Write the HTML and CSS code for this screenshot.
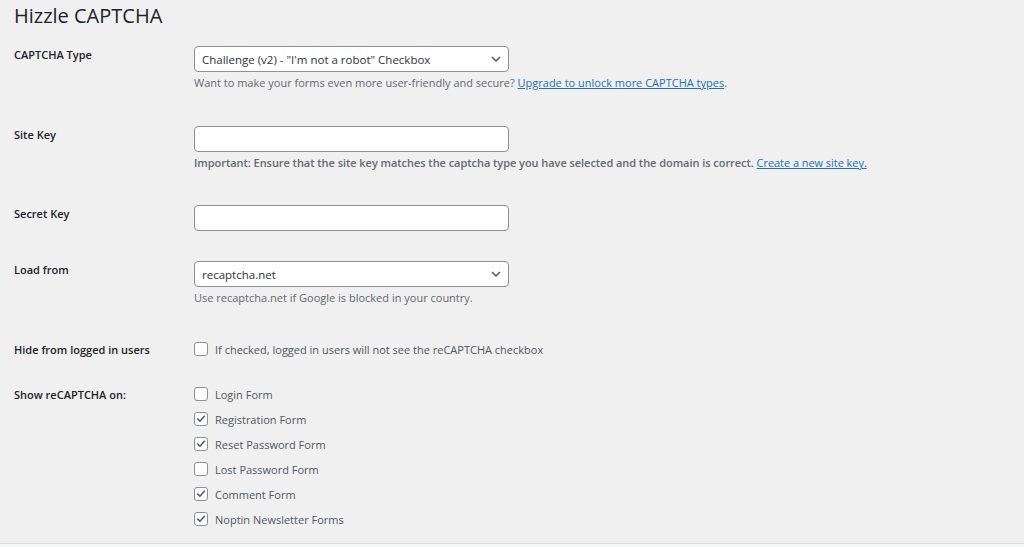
FILE: index.html
```html
<!DOCTYPE html>
<html lang="en">
  <head>
    <meta charset="UTF-8" />
    <meta name="viewport" content="width=device-width, initial-scale=1.0" />
    <title>Hizzle CAPTCHA</title>
    <link rel="stylesheet" href="styles.css">
  </head>
  <body>
    <div class="wrap">
      <h1>Hizzle CAPTCHA</h1>
      <div class="form-table">
        <div class="row">
          <div class="row-label">CAPTCHA Type</div>
          <div class="row-field">
            <div class="select-wrap">
              <select class="field-input">
                <option>Challenge (v2) - "I'm not a robot" Checkbox</option>
              </select>
              <svg class="chevron" width="10" height="6" viewBox="0 0 10 6"><path d="M1 1 L5 5 L9 1" fill="none" stroke="#50575e" stroke-width="1.5"/></svg>
            </div>
            <p class="description">Want to make your forms even more user-friendly and secure? <a href="#">Upgrade to unlock more CAPTCHA types</a>.</p>
          </div>
        </div>
        <div class="row">
          <div class="row-label">Site Key</div>
          <div class="row-field">
            <input class="field-input" type="text">
            <p class="description strong">Important: Ensure that the site key matches the captcha type you have selected and the domain is correct. <a href="#">Create a new site key.</a></p>
          </div>
        </div>
        <div class="row">
          <div class="row-label">Secret Key</div>
          <div class="row-field">
            <input class="field-input" type="text">
          </div>
        </div>
        <div class="row">
          <div class="row-label">Load from</div>
          <div class="row-field">
            <div class="select-wrap">
              <select class="field-input">
                <option>recaptcha.net</option>
              </select>
              <svg class="chevron" width="10" height="6" viewBox="0 0 10 6"><path d="M1 1 L5 5 L9 1" fill="none" stroke="#50575e" stroke-width="1.5"/></svg>
            </div>
            <p class="description">Use recaptcha.net if Google is blocked in your country.</p>
          </div>
        </div>
        <div class="row row-tight">
          <div class="row-label">Hide from logged in users</div>
          <div class="row-field">
            <label class="check"><span class="box"></span>If checked, logged in users will not see the reCAPTCHA checkbox</label>
          </div>
        </div>
        <div class="row">
          <div class="row-label">Show reCAPTCHA on:</div>
          <div class="row-field check-list">
            <label class="check"><span class="box"></span>Login Form</label>
            <label class="check"><span class="box"><svg width="14" height="14" viewBox="0 0 14 14"><path d="M3.3 6.6 L6 9.2 L10.8 3.8" fill="none" stroke="#50575e" stroke-width="1.5"/></svg></span>Registration Form</label>
            <label class="check"><span class="box"><svg width="14" height="14" viewBox="0 0 14 14"><path d="M3.3 6.6 L6 9.2 L10.8 3.8" fill="none" stroke="#50575e" stroke-width="1.5"/></svg></span>Reset Password Form</label>
            <label class="check"><span class="box"></span>Lost Password Form</label>
            <label class="check"><span class="box"><svg width="14" height="14" viewBox="0 0 14 14"><path d="M3.3 6.6 L6 9.2 L10.8 3.8" fill="none" stroke="#50575e" stroke-width="1.5"/></svg></span>Comment Form</label>
            <label class="check"><span class="box"><svg width="14" height="14" viewBox="0 0 14 14"><path d="M3.3 6.6 L6 9.2 L10.8 3.8" fill="none" stroke="#50575e" stroke-width="1.5"/></svg></span>Noptin Newsletter Forms</label>
          </div>
        </div>
      </div>
    </div>
    <footer class="footer"></footer>
  </body>
</html>
```

FILE: styles.css
```css
html,
body {
  height: 100%;
}
body {
  display: flex;
  flex-direction: column;
  margin: 0;
  padding: 0;
  background-color: #f0f0f1;
  font-family: "Open Sans", "Noto Sans", sans-serif;
  color: #3c434a;
}
.wrap {
  padding-left: 14px;
}
h1 {
  margin: 0;
  padding-top: 2px;
  font-size: 20px;
  font-weight: 400;
  line-height: 27px;
  color: #1d2327;
}
.form-table {
  margin-top: 2px;
}
.row {
  display: flex;
  padding: 15px 0;
}
.row-tight {
  padding-bottom: 13px;
}
.row-label {
  width: 180px;
  flex-shrink: 0;
  font-size: 11px;
  font-weight: 600;
  line-height: 17px;
  color: #1d2327;
}
.row-field {
  flex: 1;
}
.select-wrap {
  position: relative;
  width: 315px;
}
.field-input {
  display: block;
  box-sizing: border-box;
  width: 315px;
  height: 26px;
  margin: 0;
  padding: 0 24px 0 7px;
  border: 1px solid #8c8f94;
  border-radius: 4px;
  background-color: white;
  font-family: "Open Sans", "Noto Sans", sans-serif;
  font-size: 11.5px;
  color: #2c3338;
  appearance: none;
  -webkit-appearance: none;
}
.chevron {
  position: absolute;
  right: 8px;
  top: 10px;
}
.description {
  margin: 4px 0 5.5px;
  font-size: 11px;
  line-height: 14px;
  color: #646970;
}
.description.strong {
  font-weight: 600;
  letter-spacing: -0.05px;
}
.description a {
  color: #2271b1;
  font-weight: 400;
}
.check-list {
  display: flex;
  flex-direction: column;
  gap: 8px;
}
.check {
  display: flex;
  align-items: center;
  gap: 7px;
  font-size: 11px;
  line-height: 17px;
  color: #50575e;
}
.box {
  display: block;
  box-sizing: border-box;
  width: 14px;
  height: 14px;
  border: 1px solid #8c8f94;
  border-radius: 3px;
  background-color: white;
  overflow: hidden;
}
.box svg {
  display: block;
  margin: -1px;
}
.footer {
  flex: 1;
  border-top: 1px solid #dcdcde;
  background-color: #f6f7f7;
}
```
